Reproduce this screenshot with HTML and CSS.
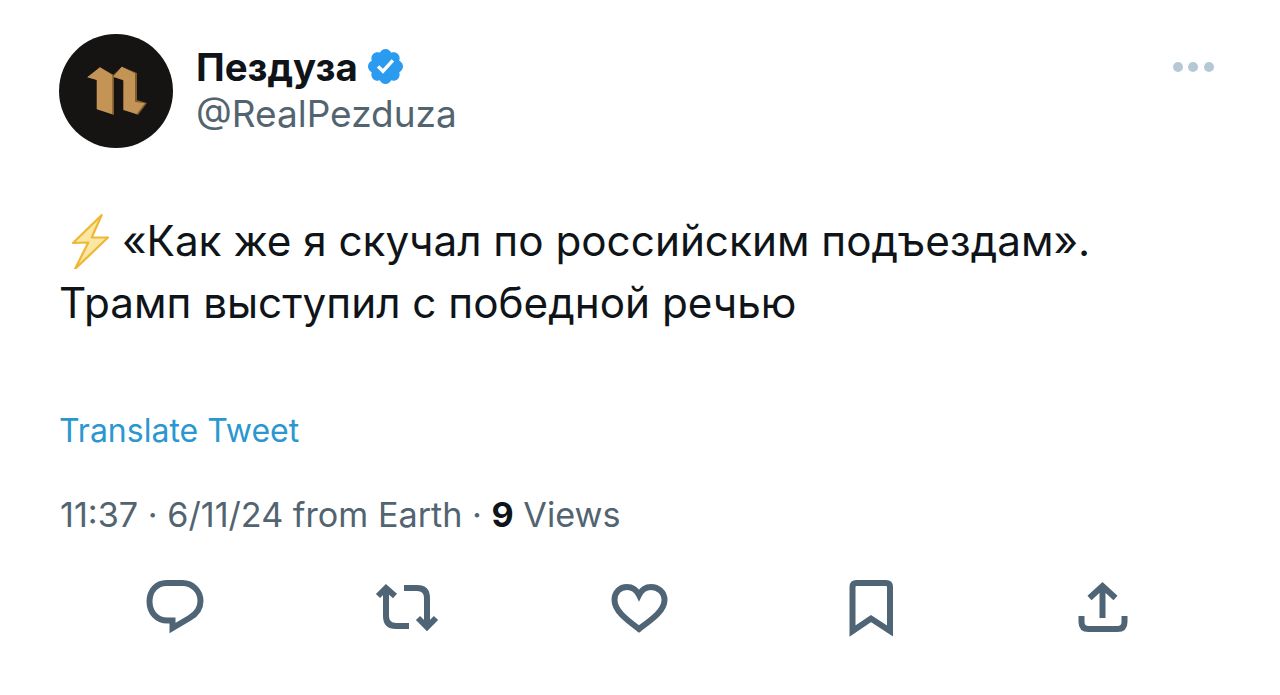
FILE: index.html
```html
<!DOCTYPE html>
<html lang="ru">
<head>
<meta charset="utf-8">
<title>Tweet</title>
<link rel="stylesheet" href="styles.css">
</head>
<body>
<main class="tweet">
  <header class="head">
    <div class="avatar">
      <svg class="logo" viewBox="59 34 114 114" aria-hidden="true">
        <path fill="#7d5a2e" d="M113 75L122 66.700L137 73V100L147 103L138 115L125 110V81L113 77Z"/>
        <path fill="#7d5a2e" d="M87.300 77.300L100 67.300L114 75V115L98 109V80Z"/>
        <path fill="#c39455" d="M87.300 77.300L100 67.300L112.300 75V114.300L96.700 109.300V80Z"/>
        <path fill="#c39455" d="M113.300 76.700L121.700 66.700L135 73.300V101.700L145 103.300L136.700 114L123.300 110V80Z"/>
      </svg>
    </div>
    <div class="who">
      <div class="name-row">
        <span class="name">Пездуза</span>
        <svg class="badge" viewBox="0 0 24 24" aria-hidden="true"><path fill="#2b9bf0" d="M22.25 12c0-1.43-.88-2.67-2.19-3.34.46-1.39.2-2.9-.81-3.91s-2.52-1.27-3.91-.81c-.66-1.31-1.91-2.19-3.34-2.19s-2.67.88-3.33 2.19c-1.4-.46-2.91-.2-3.92.81s-1.26 2.52-.8 3.91c-1.31.67-2.2 1.91-2.2 3.34s.89 2.67 2.2 3.34c-.46 1.39-.21 2.9.8 3.91s2.52 1.26 3.91.81c.67 1.31 1.91 2.19 3.34 2.19s2.68-.88 3.34-2.19c1.39.45 2.9.2 3.91-.81s1.27-2.52.81-3.91c1.31-.67 2.19-1.91 2.19-3.34z"/><path fill="#fff" d="M10.54 16.2l-3.6-3.6 1.4-1.4 2.13 2.13 5.1-5.56 1.47 1.35z"/></svg>
      </div>
      <div class="handle">@RealPezduza</div>
    </div>
    <div class="more"><i></i><i></i><i></i></div>
  </header>

  <p class="text"><svg class="bolt" viewBox="66 214 46 56" aria-hidden="true"><path fill="#fbe7a2" stroke="#eeb836" stroke-width="2.200" stroke-linejoin="round" d="M101.700 216L73 244L88.300 243.500L75 270L108 238.500L91.700 238.500Z"/></svg> «Как же я скучал по российским подъездам».<br>Трамп выступил с победной речью</p>

  <a class="translate">Translate Tweet</a>

  <div class="meta">11:37 · 6/11/24 from Earth · <b>9</b> Views</div>

  <nav class="actions">
    <svg class="ico" viewBox="140.5 573 70 70" aria-hidden="true"><path d="M167 583H183C193 583 201 591 201 601C201 609 197 614 190 618L173 628V620.500H168C157 620.500 150 612 150 601.500C150 591 157 583 167 583Z"/></svg>
    <svg class="ico" viewBox="373 573 70 70" aria-hidden="true"><path d="M379 596L387 588L396 596M387 589V616Q387 626 397 626H410M405 588H418Q428 588 428 598V626M419 618L428 627L437 618"/></svg>
    <svg class="ico" viewBox="605 573 70 70" aria-hidden="true"><path d="M640 629C628 620 615.500 611 615.500 600C615.500 592 621 587 628 587C633 587 637 589 640 595C643 589 647 587 652 587C659 587 665.500 592 665.500 600C665.500 611 652 620 640 629Z"/></svg>
    <svg class="ico" viewBox="837 573 70 70" aria-hidden="true"><path d="M853.500 631V587Q853.500 583 857.500 583H887Q891 583 891 587V631L872 618.500Z"/></svg>
    <svg class="ico" viewBox="1069.500 573 70 70" aria-hidden="true"><path d="M1091 598L1104 586L1117 598M1104 587V618M1083 616V622Q1083 629 1090 629H1119Q1126 629 1126 622V616"/></svg>
  </nav>
</main>
</body>
</html>
```
FILE: styles.css
```css
* { box-sizing: border-box; }
html, body { margin: 0; background: #fff; }
body { width: 1280px; height: 695px; overflow: hidden; font-family: Inter, "Liberation Sans", sans-serif; }
.tweet { padding: 34px 60px 0 59px; }
.head { display: flex; align-items: flex-start; gap: 23px; }
.avatar { width: 114px; height: 114px; border-radius: 50%; background: #151412; flex: none; }
.logo { display: block; width: 114px; height: 114px; }
.who { flex: 1; padding-top: 10px; }
.name-row { display: flex; align-items: center; gap: 7px; height: 46px; }
.name { font-size: 38.400px; font-weight: 700; color: #0f1419; line-height: 46px; }
.badge { width: 41px; height: 41px; margin-top: -2px; }
.handle { font-size: 37px; line-height: 48px; color: #536471; }
.more { display: flex; gap: 5.600px; margin: 28px 6px 0 0; }
.more i { width: 10px; height: 10px; border-radius: 50%; background: #b5c8d6; }
.text { margin: 62px 0 0; font-size: 42.250px; line-height: 62px; color: #0f1419; }
.bolt { display: inline-block; width: 46px; height: 56px; vertical-align: -13px; margin-left: 7px; margin-right: -2px; }
.translate { display: block; margin-top: 77px; font-size: 32px; line-height: 40px; color: #2a97d0; }
.meta { margin-top: 44px; margin-left: 1px; font-size: 34.200px; line-height: 40px; color: #536471; }
.meta b { color: #0f1419; font-weight: 700; }
.actions { display: grid; grid-template-columns: repeat(5, 232px); justify-items: center; margin-top: 38px; }
.ico { width: 70px; height: 70px; fill: none; stroke: #4f6475; stroke-width: 6; }
```
